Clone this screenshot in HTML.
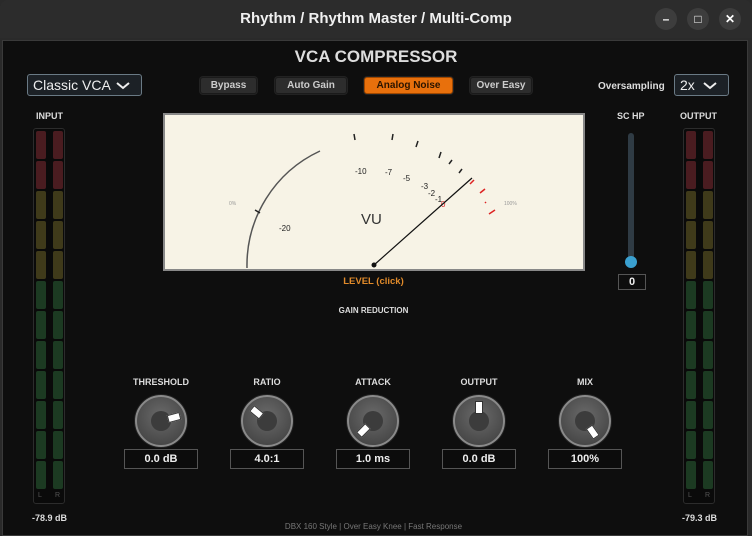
<!DOCTYPE html>
<html><head><meta charset="utf-8"><style>
*{margin:0;padding:0;box-sizing:border-box}
body{width:752px;height:536px;overflow:hidden;background:#2a2a2a;font-family:"Liberation Sans",sans-serif;position:relative}
.a{position:absolute}
.title{left:0;top:0;width:752px;height:38px;background:#2c2c2c;color:#f0f0f0;font-weight:bold;font-size:15px;text-align:center;line-height:38px;border-radius:8px 8px 0 0}
.wb{width:22px;height:22px;border-radius:50%;background:#3d3d3d;top:8px;color:#fff;font-size:12px;text-align:center;line-height:22px;font-weight:bold}
.panel{left:2px;top:40px;width:746px;height:496px;background:#0e0e0e;border:1px solid #3a3a3a}
.lbl{color:#ddd;font-weight:bold;font-size:9px}
.btn{top:77px;height:17px;background:#2d2d2d;border:1px solid #1a1a1a;border-radius:3px;color:#ccc;font-size:10px;font-weight:bold;text-align:center;line-height:15px;box-shadow:0 0 0 1px #222}
.sel{height:22px;border:1px solid #6a7a85;background:#1c2126;border-radius:3px;color:#eee;font-size:14px;line-height:20px;padding-left:5px}
.sel svg{position:absolute;top:7px}
.meter{width:32px;height:376px;top:128px;border:1px solid #2c2c2c;border-radius:3px;background:#0a0a0a}
.seg{width:10px;height:28px;border-radius:2px}
.vbox{width:74px;height:20px;top:449px;border:1px solid #555;color:#eee;font-weight:bold;font-size:11px;text-align:center;line-height:18px;background:#0c0c0c}
.knob{width:52px;height:52px;border-radius:50%;top:395px;background:radial-gradient(circle at 50% 40%,#6a6a6a,#4a4a4a 70%,#3a3a3a);border:2px solid #8a8a8a;box-shadow:0 0 0 1px #222}
.knob .c{position:absolute;left:14px;top:14px;width:20px;height:20px;border-radius:50%;background:#3c3c3c}
.knob .i{position:absolute;left:20px;top:4px;width:8px;height:13px;background:#fff;border:1px solid #333;transform-origin:4px 20px}
</style></head><body>
<div class="a title">Rhythm / Rhythm Master / Multi-Comp</div>
<div class="a wb" style="left:655px">&#8211;</div>
<div class="a wb" style="left:687px">&#9633;</div>
<div class="a wb" style="left:719px">✕</div>
<div class="a panel"></div>
<div class="a" style="left:0;top:47px;width:752px;text-align:center;color:#ddd;font-weight:bold;font-size:17px">VCA COMPRESSOR</div>
<div class="a sel" style="left:27px;top:74px;width:115px">Classic VCA <svg style="left:88px" width="14" height="8"><path d="M1 1 L7 6 L13 1" fill="none" stroke="#eee" stroke-width="2"/></svg></div>
<div class="a sel" style="left:674px;top:74px;width:55px">2x <svg style="left:28px" width="14" height="8"><path d="M1 1 L7 6 L13 1" fill="none" stroke="#eee" stroke-width="2"/></svg></div>
<div class="a lbl" style="left:598px;top:81px;font-size:10px">Oversampling</div>
<div class="a btn" style="left:200px;width:57px">Bypass</div>
<div class="a btn" style="left:275px;width:72px">Auto Gain</div>
<div class="a btn" style="left:364px;width:89px;background:#e8700c;color:#2a1400;border-color:#a04800">Analog Noise</div>
<div class="a btn" style="left:470px;width:62px">Over Easy</div>
<div class="a lbl" style="left:36px;top:111px">INPUT</div>
<div class="a lbl" style="left:680px;top:111px">OUTPUT</div>
<div class="a lbl" style="left:617px;top:111px">SC HP</div>
<div class="a meter" style="left:33px" id="m1"></div>
<div class="a meter" style="left:683px" id="m2"></div>
<div class="a lbl" style="left:32px;top:513px">-78.9 dB</div>
<div class="a lbl" style="left:682px;top:513px">-79.3 dB</div>
<div class="a" style="left:628px;top:133px;width:6px;height:130px;background:#2f3b44;border-radius:3px"></div>
<div class="a" style="left:625px;top:256px;width:12px;height:12px;border-radius:50%;background:#3aa0d0"></div>
<div class="a" style="left:618px;top:274px;width:28px;height:16px;border:1px solid #555;color:#eee;font-size:11px;font-weight:bold;text-align:center;line-height:14px">0</div>
<svg class="a" style="left:163px;top:113px" width="422" height="158">
<rect x="1" y="1" width="420" height="156" fill="#f7f3e6" stroke="#888" stroke-width="2"/>
<path d="M84 155 A126 126 0 0 1 157 38" fill="none" stroke="#555" stroke-width="1.5"/>
<g stroke="#222" stroke-width="1.5">
<line x1="92" y1="97" x2="97" y2="100"/><line x1="191" y1="21" x2="192" y2="27"/><line x1="230" y1="21" x2="229" y2="27"/><line x1="255" y1="28" x2="253" y2="34"/><line x1="278" y1="39" x2="276" y2="45"/><line x1="289" y1="47" x2="286" y2="51"/><line x1="299" y1="56" x2="296" y2="60"/></g>
<g stroke="#d22" stroke-width="1.5"><line x1="311" y1="67" x2="307" y2="71"/><line x1="322" y1="76" x2="317" y2="80"/><line x1="323" y1="89" x2="322" y2="90"/><line x1="332" y1="97" x2="326" y2="101"/></g>
<g font-family="Liberation Sans" font-size="8" fill="#222"><text x="192" y="61">-10</text><text x="222" y="62">-7</text><text x="240" y="68">-5</text><text x="258" y="76">-3</text><text x="265" y="83">-2</text><text x="272" y="89">-1</text><text x="278" y="94" fill="#d22">0</text><text x="116" y="118">-20</text></g>
<text x="66" y="92" font-size="5" fill="#999" font-family="Liberation Sans">0%</text>
<text x="341" y="92" font-size="5" fill="#999" font-family="Liberation Sans">100%</text>
<text x="198" y="111" font-size="15" fill="#333" font-family="Liberation Sans">VU</text>
<line x1="211" y1="152" x2="309" y2="65" stroke="#111" stroke-width="1.2"/>
<circle cx="211" cy="152" r="2.5" fill="#111"/>
</svg>
<div class="a" style="left:0;top:276px;width:747px;text-align:center;color:#e08a2a;font-weight:bold;font-size:9.5px">LEVEL (click)</div>
<div class="a lbl" style="left:0;top:306px;width:747px;text-align:center;font-size:8px">GAIN REDUCTION</div>
<div class="a lbl" style="left:124px;top:377px;width:74px;text-align:center">THRESHOLD</div>
<div class="a lbl" style="left:230px;top:377px;width:74px;text-align:center">RATIO</div>
<div class="a lbl" style="left:336px;top:377px;width:74px;text-align:center">ATTACK</div>
<div class="a lbl" style="left:442px;top:377px;width:74px;text-align:center">OUTPUT</div>
<div class="a lbl" style="left:548px;top:377px;width:74px;text-align:center">MIX</div>
<div class="a knob" style="left:135px"><div class="c"></div><div class="i" style="transform:rotate(75deg)"></div></div>
<div class="a knob" style="left:241px"><div class="c"></div><div class="i" style="transform:rotate(-50deg)"></div></div>
<div class="a knob" style="left:347px"><div class="c"></div><div class="i" style="transform:rotate(-135deg)"></div></div>
<div class="a knob" style="left:453px"><div class="c"></div><div class="i" style="transform:rotate(0deg)"></div></div>
<div class="a knob" style="left:559px"><div class="c"></div><div class="i" style="transform:rotate(145deg)"></div></div>
<div class="a vbox" style="left:124px">0.0 dB</div>
<div class="a vbox" style="left:230px">4.0:1</div>
<div class="a vbox" style="left:336px">1.0 ms</div>
<div class="a vbox" style="left:442px">0.0 dB</div>
<div class="a vbox" style="left:548px">100%</div>
<div class="a" style="left:0;top:522px;width:747px;text-align:center;color:#777;font-size:8px">DBX 160 Style | Over Easy Knee | Fast Response</div>
<script>
["m1","m2"].forEach(function(id){var m=document.getElementById(id),h="";
for(var i=0;i<12;i++){var c=i<2?"#4a1c20":i<5?"#3f3a1a":"#1c3a22";
[2,19].forEach(function(x){h+='<div class="a seg" style="left:'+x+'px;top:'+(2+i*30)+'px;background:'+c+'"></div>'});}
h+='<div class="a" style="left:4px;top:363px;font-size:7px;color:#555">L</div><div class="a" style="left:21px;top:363px;font-size:7px;color:#555">R</div>';
m.innerHTML=h;});
</script>
</body></html>
